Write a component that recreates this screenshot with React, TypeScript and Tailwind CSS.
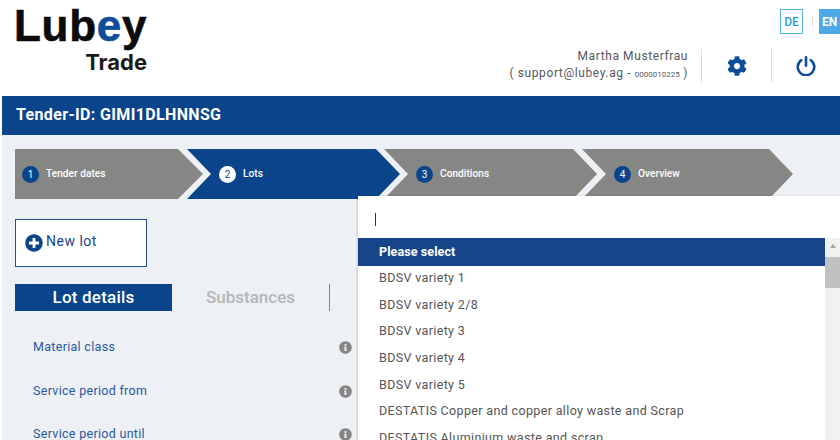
import { FaCog, FaInfoCircle, FaPlusCircle } from "react-icons/fa";

const steps = [
  { no: 1, label: "Tender dates", active: false },
  { no: 2, label: "Lots", active: true },
  { no: 3, label: "Conditions", active: false },
  { no: 4, label: "Overview", active: false },
];

const options = [
  "BDSV variety 1",
  "BDSV variety 2/8",
  "BDSV variety 3",
  "BDSV variety 4",
  "BDSV variety 5",
  "DESTATIS Copper and copper alloy waste and Scrap",
  "DESTATIS Aluminium waste and scrap",
];

const fields = ["Material class", "Service period from", "Service period until"];

function stepShape(no: number) {
  if (no === 1) return "w-[188px] pl-[7px] [clip-path:polygon(0_0,163px_0,100%_50%,163px_100%,0_100%)]";
  if (no === 4) return "-ml-[15px] w-[211px] pl-[32px] [clip-path:polygon(0_0,187px_0,100%_50%,187px_100%,0_100%,24px_50%)]";
  return "-ml-[16px] w-[213px] pl-[32px] [clip-path:polygon(0_0,189px_0,100%_50%,189px_100%,0_100%,24px_50%)]";
}

function Header() {
  return (
    <header className="flex h-[96px] justify-between bg-white pl-[14px]">
      <div className="flex w-[133px] flex-col">
        <div className="font-['Liberation_Sans',sans-serif] text-[44px] leading-[51px] font-bold tracking-[0.7px] whitespace-nowrap text-[#0b0b0b] [-webkit-text-stroke:0.6px_currentColor]">
          Lub<span className="text-[#0f4c9a]">e</span>y
        </div>
        <div className="text-right font-['Inter',sans-serif] text-[22px] leading-[22px] font-bold text-[#1a1a1a]">
          Trade
        </div>
      </div>
      <div className="flex flex-col items-end pt-[9px]">
        <div className="flex items-center">
          <span className="flex h-[25px] w-[23px] items-center justify-center border border-[#5aaee6] text-[12px] font-medium text-[#2a9fd0]">
            DE
          </span>
          <span className="mr-[6px] ml-[9px] h-[9px] w-px bg-[#ecd4d8]" />
          <span className="flex h-[25px] w-[21px] items-center justify-start bg-[#4daae6] pl-[3px] text-[12px] font-bold text-white">
            EN
          </span>
        </div>
        <div className="mt-[15px] flex h-[33px] items-center">
          <div className="text-right text-[12px] leading-[17px] tracking-[0.6px] text-[#55595e]">
            <div>Martha Musterfrau</div>
            <div>
              ( support@lubey.ag - <span className="text-[8px] tracking-normal">0000010225</span> )
            </div>
          </div>
          <span className="ml-[13px] h-full w-px bg-[#dcdcdc]" />
          <div className="flex w-[69px] justify-center">
            <FaCog className="size-[20px] text-[#0f4c9a]" />
          </div>
          <span className="h-full w-px bg-[#dcdcdc]" />
          <div className="flex w-[68px] justify-center">
            <svg viewBox="0 0 20 20" className="size-[20px] text-[#0f4c9a]" fill="none" stroke="currentColor" strokeWidth="2.6" strokeLinecap="round">
              <path d="M5.2 4.2a8.3 8.3 0 1 0 9.6 0" />
              <path d="M10 1.4v8.4" />
            </svg>
          </div>
        </div>
      </div>
    </header>
  );
}

function StepBar() {
  return (
    <div className="flex h-[50px]">
      {steps.map((step) => (
        <div
          key={step.no}
          className={
            "flex items-center text-[10.2px] font-medium text-white " +
            stepShape(step.no) +
            (step.active ? " bg-[#0a458c]" : " bg-[#868684]")
          }
        >
          <span
            className={
              "mr-[7px] flex size-[17px] items-center justify-center rounded-full text-[10px] font-normal " +
              (step.active ? "bg-white text-[#0a458c]" : "bg-[#0a458c] text-white")
            }
          >
            {step.no}
          </span>
          {step.label}
        </div>
      ))}
    </div>
  );
}

function LotDetails() {
  return (
    <div className="w-[338px]">
      <button className="mt-[20px] flex h-[48px] w-[132px] items-center border-[1.5px] border-[#1f5596] bg-white pb-[3px] pl-[8.5px] text-[14px] tracking-[0.5px] text-[#17458a]">
        <FaPlusCircle className="mt-[3px] mr-[3.5px] size-[18px] text-[#0a458c]" />
        New lot
      </button>
      <div className="mt-[17px] flex h-[27px]">
        <div className="flex w-[157px] items-center justify-center bg-[#0a458c] text-[17px] font-medium tracking-[0.2px] text-white">
          Lot details
        </div>
        <div className="flex w-[158px] items-center justify-center border-r border-[#868684] text-[17px] font-medium text-[#b4b6b8]">
          Substances
        </div>
      </div>
      <div className="mt-[25px] flex flex-col gap-[20.5px] pl-[18px]">
        {fields.map((label) => (
          <div key={label} className="flex h-[23px] w-[319px] items-center justify-between">
            <span className="text-[12.5px] tracking-[0.3px] text-[#2a5a9c]">{label}</span>
            <FaInfoCircle className="size-[13px] text-[#868684]" />
          </div>
        ))}
      </div>
    </div>
  );
}

function SelectMenu() {
  return (
    <div className="absolute top-[196px] left-[358px] flex h-[244px] w-[482px] flex-col bg-white shadow-[-1px_0_2px_rgba(0,0,0,0.15)]">
      <div className="flex h-[42px] shrink-0 items-center pt-[5px] pl-[17px]">
        <span className="h-[13px] w-px bg-[#333]" />
      </div>
      <div className="flex min-h-0 flex-1">
        <div className="flex-1 overflow-hidden">
          <div className="-mb-px flex h-[28px] items-center bg-[#17458a] pl-[21px] text-[12.5px] font-bold tracking-[0.1px] text-white">
            Please select
          </div>
          {options.map((option) => (
            <div
              key={option}
              className="flex h-[26.7px] items-center pl-[21px] text-[12.5px] tracking-[0.35px] whitespace-nowrap text-[#555]"
            >
              {option}
            </div>
          ))}
        </div>
        <div className="flex w-[15px] flex-col items-center bg-[#f1f1f1]">
          <div className="mt-[6px] h-0 w-0 border-x-[3px] border-b-[4px] border-x-transparent border-b-[#a3a3a3]" />
          <div className="mt-[9px] h-[31px] w-full bg-[#c1c1c1]" />
        </div>
      </div>
    </div>
  );
}

export default function App() {
  return (
    <div className="relative h-[440px] w-[840px] overflow-hidden bg-white font-['Roboto',sans-serif]">
      <Header />
      <div className="ml-[2px]">
        <div className="flex h-[39px] items-center bg-[#0a458c] pb-px pl-[14px] text-[16px] font-bold tracking-[0.35px] text-white">
          Tender-ID: GIMI1DLHNNSG
        </div>
        <div className="h-[305px] bg-[#edf0f4] pt-[14px] pl-[13px]">
          <StepBar />
          <LotDetails />
        </div>
      </div>
      <SelectMenu />
    </div>
  );
}
